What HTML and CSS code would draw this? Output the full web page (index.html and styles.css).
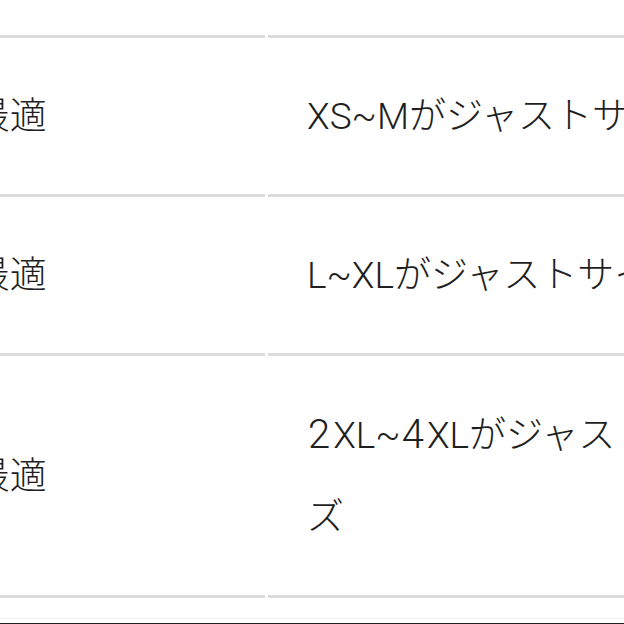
FILE: index.html
```html
<!DOCTYPE html>
<html lang="ja">
<head>
<meta charset="utf-8">
<link rel="stylesheet" href="styles.css">
</head>
<body>
<div class="sheet">
  <div class="table">
    <div class="cell top"></div>
    <div class="cell top"></div>

    <div class="cell left">体重40~55kgの方に最適</div>
    <div class="cell right">XS~Mがジャストサイズ</div>

    <div class="cell left">体重55~70kgの方に最適</div>
    <div class="cell right">L~XLがジャストサイズ</div>

    <div class="cell left">体重70~90kgの方に最適</div>
    <div class="cell right"><span class="num">2</span>XL~<span class="num">4</span>XLがジャストサイズ</div>
  </div>
  <div class="after"></div>
  <div class="edge"></div>
</div>
</body>
</html>
```
FILE: styles.css
```css
html, body {
  margin: 0;
  padding: 0;
  background: #ffffff;
}
body {
  width: 624px;
  height: 624px;
  overflow: hidden;
  font-family: Roboto, "Noto Sans CJK JP", sans-serif;
  font-weight: 300;
  color: #1f1f1f;
}
.sheet {
  display: flex;
  flex-direction: column;
}
.table {
  display: grid;
  grid-template-columns: 662px 482px;
  column-gap: 3px;
  margin-left: -397px;
}
.cell {
  border-bottom: 3px solid #dcdcdc;
  font-size: 37px;
  line-height: 82px;
  padding: 38px 0 36px 39px;
}
.cell.top {
  padding: 0;
  height: 35px;
}
.left {
  display: flex;
  align-items: center;
  white-space: nowrap;
}
.right {
  word-break: break-all;
}
.num {
  font-size: 40px;
  padding: 0 3px 0 1px;
}
.after {
  height: 20px;
  border-bottom: 1px solid #efefef;
}
.edge {
  margin-top: 4px;
  height: 3px;
  background: #1e1e1e;
}
```
